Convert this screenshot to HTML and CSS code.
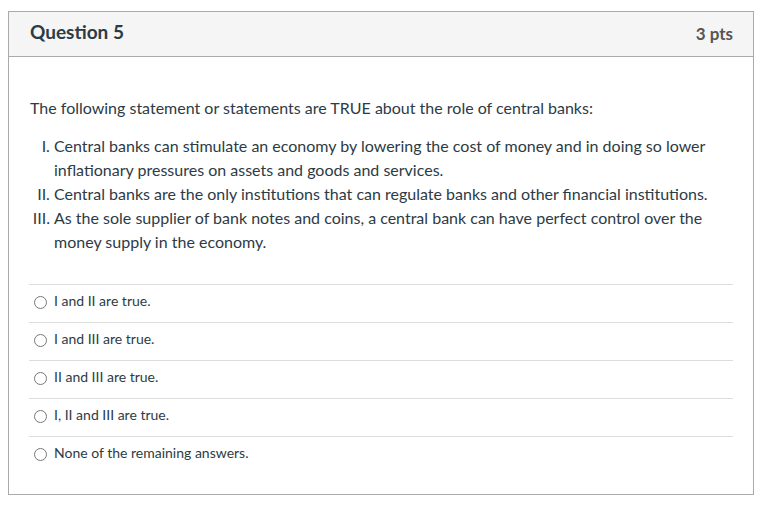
FILE: index.html
```html
<!DOCTYPE html>
<html lang="en">
<head>
<meta charset="utf-8">
<title>Question 5</title>
<link rel="stylesheet" href="styles.css">
</head>
<body>
<div class="question">
  <div class="question-header">
    <h2 class="question-title">Question 5</h2>
    <span class="question-points">3 pts</span>
  </div>
  <div class="question-body">
    <p class="question-text">The following statement or statements are TRUE about the role of central banks:</p>
    <ol class="statements">
      <li>Central banks can stimulate an economy by lowering the cost of money and in doing so lower inflationary pressures on assets and goods and services.</li>
      <li>Central banks are the only institutions that can regulate banks and other financial institutions.</li>
      <li>As the sole supplier of bank notes and coins, a central bank can have perfect control over the money supply in the economy.</li>
    </ol>
    <div class="answers">
      <label class="answer"><span class="radio"></span><span class="answer-text">I and II are true.</span></label>
      <label class="answer"><span class="radio"></span><span class="answer-text">I and III are true.</span></label>
      <label class="answer"><span class="radio"></span><span class="answer-text">II and III are true.</span></label>
      <label class="answer"><span class="radio"></span><span class="answer-text">I, II and III are true.</span></label>
      <label class="answer"><span class="radio"></span><span class="answer-text">None of the remaining answers.</span></label>
    </div>
  </div>
</div>
</body>
</html>
```

FILE: styles.css
```css
html, body {
  margin: 0;
  padding: 0;
  background: #ffffff;
}

body {
  font-family: Lato, "Open Sans", "Liberation Sans", sans-serif;
  color: #2d3b45;
  padding: 11px 8px 0 8px;
}

.question {
  width: 746px;
  box-sizing: border-box;
  border: 1px solid #aaaaaa;
  background: #ffffff;
}

.question-header {
  height: 44px;
  box-sizing: content-box;
  background: #f5f5f5;
  border-bottom: 1px solid #aaaaaa;
  display: flex;
  align-items: center;
  justify-content: space-between;
  padding: 0 20px 0 21px;
}

.question-title {
  margin: 0 0 6px 0;
  font-size: 19px;
  font-weight: 700;
  color: #2d3b45;
}

.question-points {
  font-size: 17px;
  font-weight: 700;
  color: #555555;
  margin-bottom: 2px;
}

.question-body {
  padding: 39px 20px 20px 20px;
}

.question-text {
  margin: 0;
  font-size: 16px;
  line-height: 24px;
  padding-left: 1px;
}

.statements {
  margin: 14px 0 0 0;
  padding-left: 25px;
  font-size: 16px;
  line-height: 24px;
  list-style-type: upper-roman;
}

.answers {
  margin-top: 30px;
  display: flex;
  flex-direction: column;
}

.answer {
  height: 38px;
  border-top: 1px solid #dddddd;
  display: flex;
  align-items: center;
  box-sizing: border-box;
  padding: 0 0 6px 5px;
}

.radio {
  width: 13px;
  height: 13px;
  box-sizing: border-box;
  border: 1px solid #777777;
  border-radius: 50%;
  margin-top: 4px;
  flex: none;
}

.answer-text {
  font-size: 14px;
  margin-left: 7px;
}
```
